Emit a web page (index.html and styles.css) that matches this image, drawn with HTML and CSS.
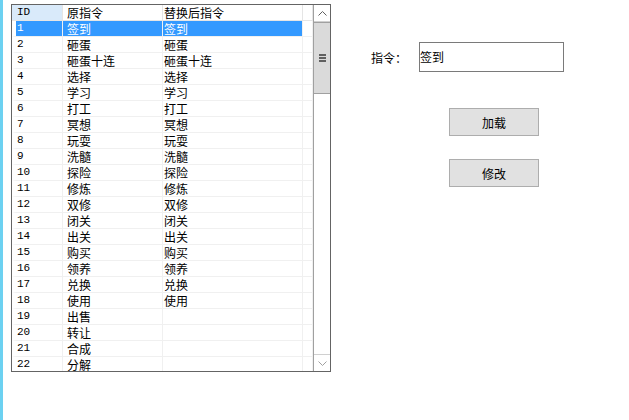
FILE: index.html
```html
<!DOCTYPE html>
<html lang="zh-CN">

<head>
    <meta charset="UTF-8">
    <title>指令替换</title>
    <link rel="stylesheet" href="styles.css">
</head>

<body>
    <div class="page">
        <div class="strip"></div>
        <div class="grid">
            <div class="grid-body">
                <table class="list">
                    <colgroup>
                        <col class="c-id">
                        <col class="c-src">
                        <col class="c-dst">
                        <col class="c-fill">
                    </colgroup>
                    <thead>
                        <tr>
                            <th class="id">ID</th>
                            <th class="src">原指令</th>
                            <th class="dst">替换后指令</th>
                            <th></th>
                        </tr>
                    </thead>
                    <tbody>
                        <tr class="selected"><td class="id">1</td><td class="src">签到</td><td class="dst">签到</td><td></td></tr>
                        <tr><td class="id">2</td><td class="src">砸蛋</td><td class="dst">砸蛋</td><td></td></tr>
                        <tr><td class="id">3</td><td class="src">砸蛋十连</td><td class="dst">砸蛋十连</td><td></td></tr>
                        <tr><td class="id">4</td><td class="src">选择</td><td class="dst">选择</td><td></td></tr>
                        <tr><td class="id">5</td><td class="src">学习</td><td class="dst">学习</td><td></td></tr>
                        <tr><td class="id">6</td><td class="src">打工</td><td class="dst">打工</td><td></td></tr>
                        <tr><td class="id">7</td><td class="src">冥想</td><td class="dst">冥想</td><td></td></tr>
                        <tr><td class="id">8</td><td class="src">玩耍</td><td class="dst">玩耍</td><td></td></tr>
                        <tr><td class="id">9</td><td class="src">洗髓</td><td class="dst">洗髓</td><td></td></tr>
                        <tr><td class="id">10</td><td class="src">探险</td><td class="dst">探险</td><td></td></tr>
                        <tr><td class="id">11</td><td class="src">修炼</td><td class="dst">修炼</td><td></td></tr>
                        <tr><td class="id">12</td><td class="src">双修</td><td class="dst">双修</td><td></td></tr>
                        <tr><td class="id">13</td><td class="src">闭关</td><td class="dst">闭关</td><td></td></tr>
                        <tr><td class="id">14</td><td class="src">出关</td><td class="dst">出关</td><td></td></tr>
                        <tr><td class="id">15</td><td class="src">购买</td><td class="dst">购买</td><td></td></tr>
                        <tr><td class="id">16</td><td class="src">领养</td><td class="dst">领养</td><td></td></tr>
                        <tr><td class="id">17</td><td class="src">兑换</td><td class="dst">兑换</td><td></td></tr>
                        <tr><td class="id">18</td><td class="src">使用</td><td class="dst">使用</td><td></td></tr>
                        <tr><td class="id">19</td><td class="src">出售</td><td class="dst"></td><td></td></tr>
                        <tr><td class="id">20</td><td class="src">转让</td><td class="dst"></td><td></td></tr>
                        <tr><td class="id">21</td><td class="src">合成</td><td class="dst"></td><td></td></tr>
                        <tr><td class="id">22</td><td class="src">分解</td><td class="dst"></td><td></td></tr>
                    </tbody>
                </table>
            </div>
            <div class="vscroll">
                <div class="arrow">
                    <svg width="9" height="5" viewBox="0 0 9 5"><path d="M0.5 4.5 L4.5 0.5 L8.5 4.5" fill="none" stroke="#606060" stroke-width="1"/></svg>
                </div>
                <div class="thumb">
                    <span class="grip"></span>
                    <span class="grip"></span>
                    <span class="grip"></span>
                </div>
                <div class="track"></div>
                <div class="arrow">
                    <svg width="9" height="5" viewBox="0 0 9 5"><path d="M0.5 0.5 L4.5 4.5 L8.5 0.5" fill="none" stroke="#a0a0a0" stroke-width="1"/></svg>
                </div>
            </div>
        </div>

        <div class="side">
            <div class="field">
                <label class="field-label">指令：</label>
                <div class="field-box">签到</div>
            </div>
            <button class="btn first">加载</button>
            <button class="btn">修改</button>
        </div>
    </div>
</body>

</html>
```

FILE: styles.css
```css
body {
    margin: 0;
    background-color: #ffffff;
    font-family: "Noto Sans CJK SC", "DejaVu Sans", sans-serif;
    font-size: 12px;
    color: #000000;
}

.page {
    display: flex;
    height: 420px;
}

.strip {
    width: 3px;
    background-color: #6cd1f1;
}

/* ---------- list */
.grid {
    display: flex;
    margin: 4px 0 0 8px;
    width: 318px;
    height: 366px;
    border: 1px solid #646464;
}

.grid-body {
    width: 301px;
    height: 366px;
    overflow: hidden;
}

.list {
    table-layout: fixed;
    width: 301px;
    border-collapse: separate;
    border-spacing: 0;
}

.c-id { width: 51px; }
.c-src { width: 100px; }
.c-dst { width: 140px; }
.c-fill { width: 10px; }

.list th,
.list td {
    padding: 0;
    height: 15px;
    line-height: 15px;
    border-right: 1px solid #f0f0f0;
    border-bottom: 1px solid #f0f0f0;
    text-align: left;
    font-weight: normal;
    white-space: nowrap;
    overflow: hidden;
}

.list th {
    border-bottom-color: #e5e5e5;
    border-right-color: #e5e5e5;
}

.list th.id {
    background-color: #d9eafa;
    padding-left: 5px;
    font-family: "Liberation Mono", monospace;
    font-size: 11px;
}

.list td.id {
    border-left: 4px solid #ffffff;
    padding-left: 1px;
    font-family: "Liberation Mono", monospace;
    font-size: 11px;
}

.list .src {
    padding-left: 4px;
}

.list .dst {
    padding-left: 1px;
}

.list tr.selected td.id,
.list tr.selected td.src,
.list tr.selected td.dst {
    background-color: #3399ff;
    color: #ffffff;
}

/* ---------- scrollbar */
.vscroll {
    width: 16px;
    border-left: 1px solid #a0a0a0;
    display: flex;
    flex-direction: column;
    background-color: #ffffff;
}

.arrow {
    height: 16px;
    display: flex;
    justify-content: center;
    align-items: center;
    border-bottom: 1px solid #d0d0d0;
}

.arrow:last-child {
    border-bottom: none;
    border-top: 1px solid #d0d0d0;
}

.thumb {
    height: 70px;
    background-color: #dadada;
    border-top: 1px solid #a0a0a0;
    border-bottom: 1px solid #a0a0a0;
    display: flex;
    flex-direction: column;
    justify-content: center;
    align-items: center;
    gap: 1px;
}

.grip {
    width: 7px;
    height: 2px;
    background-color: #606060;
}

.track {
    flex: 1;
}

/* ---------- right side */
.side {
    display: flex;
    flex-direction: column;
    align-items: flex-start;
    padding: 42px 0 0 40px;
}

.field {
    display: flex;
    align-items: center;
}

.field-label {
    width: 48px;
}

.field-box {
    width: 143px;
    height: 28px;
    line-height: 28px;
    border: 1px solid #7a7a7a;
    padding-left: 0;
}

.btn {
    margin: 36px 0 0 78px;
    width: 90px;
    height: 28px;
    padding: 0;
    border: 1px solid #adadad;
    background-color: #e1e1e1;
    font-family: "Noto Sans CJK SC", sans-serif;
    font-size: 12px;
    color: #000000;
}

.btn + .btn {
    margin-top: 23px;
}
```
